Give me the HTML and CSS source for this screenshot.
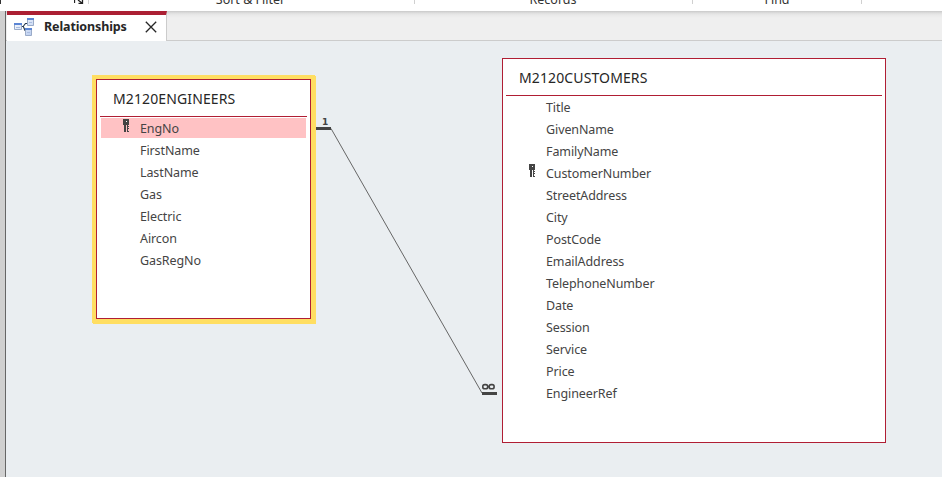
FILE: index.html
```
<!DOCTYPE html>
<html lang="en">
<head>
<meta charset="utf-8">
<title>Relationships</title>
<link rel="stylesheet" href="styles.css">
</head>
<body>
<div class="app">
  <header class="ribbon">
    <div class="group clipboard"><svg class="launcher" width="10" height="4" viewBox="0 0 10 4"><path d="M.5 0v3M4 0l4 3M4.500 3.500h4v-4" fill="none" stroke="#222" stroke-width="1.300"/></svg></div>
    <div class="group sort"><span>Sort &amp; Filter</span></div>
    <div class="group records"><span>Records</span></div>
    <div class="group find"><span>Find</span></div>
  </header>
  <div class="workspace">
    <aside class="gutter"></aside>
    <section class="document">
      <nav class="tabs">
        <div class="tab">
          <svg class="tab-icon" width="21" height="20" viewBox="0 0 21 20">
            <defs><linearGradient id="sheet" x2="1" y2="1"><stop stop-color="#fff"/><stop offset="1" stop-color="#b7cbee"/></linearGradient></defs>
            <path d="M8 8.500h2M9.500 8l2-2.500h2M9.500 9l1.500 3.500h1.500" fill="none" stroke="#283a50" stroke-width="1.200"/>
            <g fill="url(#sheet)" stroke="#9aabc8" stroke-width="1"><path d="M.5 5.500h7v6h-7zM13.500.5h6v7h-6zM11.500 10.500h6v7h-6z"/></g>
            <path d="M0 6h8M13 1h7M11 11h7" stroke="#5b85d4" stroke-width="2"/>
            <path d="M2 9.500h4M15 4.500h3M13 14.500h3" stroke="#a9bce0"/>
          </svg>
          <span class="tab-name">Relationships</span>
          <svg class="close" width="12" height="12" viewBox="0 0 12 12"><path d="M.8.8l10.400 10.400M11.200.8L.8 11.200" stroke="#262626" stroke-width="1.300"/></svg>
        </div>
      </nav>
      <main class="canvas">
        <svg class="relation" width="936" height="436" viewBox="6 41 936 436">
          <path d="M331 128.500L482 393" stroke="#666" stroke-width="1"/>
          <path d="M316 128.500h15M482 393.500h15" stroke="#444" stroke-width="3"/>
          <g fill="none" stroke="#444" stroke-width="1.600"><rect x="482.800" y="384.600" width="4.900" height="4.200" rx="1.900"/><rect x="489.200" y="384.600" width="4.900" height="4.200" rx="1.900"/><path d="M487.500 386.700h2"/></g>
        </svg>
        <span class="one">1</span>
        <article class="table engineers">
          <h2>M2120ENGINEERS</h2>
          <ul>
            <li class="selected"><svg class="key" width="7" height="14" viewBox="0 0 7 14"><path d="M0 0h6v6H0zM1 6h2v7H1zM4 6h1v7H4zM5 7h1v1H5zM5 9h1v1H5zM5 12h1v1H5z" fill="#444"/><path d="M3 2h1v1H3z" fill="#fff"/></svg>EngNo</li>
            <li>FirstName</li>
            <li>LastName</li>
            <li>Gas</li>
            <li>Electric</li>
            <li>Aircon</li>
            <li>GasRegNo</li>
          </ul>
        </article>
        <article class="table customers">
          <h2>M2120CUSTOMERS</h2>
          <ul>
            <li>Title</li>
            <li>GivenName</li>
            <li>FamilyName</li>
            <li><svg class="key" width="7" height="14" viewBox="0 0 7 14"><path d="M0 0h6v6H0zM1 6h2v7H1zM4 6h1v7H4zM5 7h1v1H5zM5 9h1v1H5zM5 12h1v1H5z" fill="#444"/><path d="M3 2h1v1H3z" fill="#fff"/></svg>CustomerNumber</li>
            <li>StreetAddress</li>
            <li>City</li>
            <li>PostCode</li>
            <li>EmailAddress</li>
            <li>TelephoneNumber</li>
            <li>Date</li>
            <li>Session</li>
            <li>Service</li>
            <li>Price</li>
            <li>EngineerRef</li>
          </ul>
        </article>
      </main>
    </section>
  </div>
</div>
</body>
</html>
```
FILE: styles.css
```
* { box-sizing: border-box; }
body { margin: 0; font-family: "Noto Sans", "Open Sans", sans-serif; font-size: 12.5px; color: #444; }
.app { display: flex; flex-direction: column; width: 942px; height: 477px; overflow: hidden; }
.ribbon { display: flex; align-items: flex-start; height: 11px; background: #fff; color: #333; }
.group { display: flex; justify-content: center; height: 4px; overflow: hidden; border-right: 1px solid #d0d0d0; }
.group span { line-height: 18px; margin-top: -9px; height: 18px; white-space: nowrap; }
.clipboard { width: 89px; justify-content: flex-end; padding-right: 4px; border-left: 1px solid #333; }
.sort { width: 326px; padding-right: 2px; }
.records { width: 278px; padding-right: 1px; }
.find { width: 169px; }
.workspace { display: flex; flex: 1; }
.gutter { width: 6px; background: #d0d0d0; border-right: 1px solid #666; }
.document { flex: 1; display: flex; flex-direction: column; }
.tabs { display: flex; height: 30px; padding-left: 1px; background: linear-gradient(#c9c9c9, #dedede 2px, #e9e9e9 4px, #efefef 7px); border-bottom: 1px solid #ccc; }
.tab { display: flex; align-items: center; width: 160px; height: 30px; padding: 0 0 2px 7px; border-top: 4px solid #ab1f33; border-right: 1px solid #ccc; background: #fff; }
.tab-name { width: 101px; margin-left: 9px; font-weight: 700; font-size: 12.5px; line-height: 18px; letter-spacing: -.12px; color: #262626; }
.tab-icon { margin-top: 2px; }
.canvas { position: relative; flex: 1; background: #eaeef1; }
.relation { position: absolute; left: 0; top: 0; }
.one { position: absolute; left: 316px; top: 75px; font: 700 9px/12px "DejaVu Sans", sans-serif; color: #444; }
.table { position: absolute; background: #fff; border: 1px solid #b01e34; }
.engineers { left: 90px; top: 38px; width: 215px; height: 240px; box-shadow: 0 0 0 4px #ffde62, 1px 1px 0 4px #ffde62; }
.customers { left: 496px; top: 17px; width: 384px; height: 385px; }
.table h2 { height: 37px; margin: 0 3px; padding: 9px 0 0 13px; border-bottom: 1px solid #b01e34; font-size: 14px; font-weight: 400; line-height: 20px; letter-spacing: .12px; color: #262626; }
.table ul { list-style: none; margin: 0; padding: 1px 4px; }
.table li { position: relative; height: 22px; padding: 1px 0 0 39px; line-height: 20px; letter-spacing: -.1px; }
.selected { background: linear-gradient(#ffc2c4 20px, transparent 20px); }
.key { position: absolute; left: 22px; top: 1px; }
.customers .key { left: 22px; }
```
